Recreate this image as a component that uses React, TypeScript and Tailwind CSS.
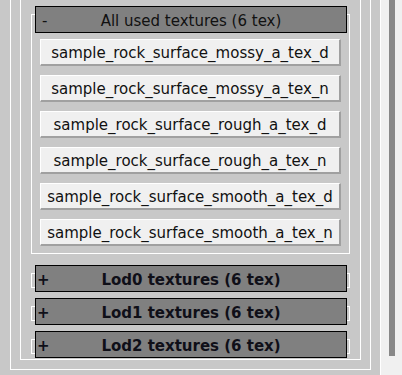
import React from "react";

const textures = [
  "sample_rock_surface_mossy_a_tex_d",
  "sample_rock_surface_mossy_a_tex_n",
  "sample_rock_surface_rough_a_tex_d",
  "sample_rock_surface_rough_a_tex_n",
  "sample_rock_surface_smooth_a_tex_d",
  "sample_rock_surface_smooth_a_tex_n",
];

function Header({ symbol, title, bold }: { symbol: string; title: string; bold?: boolean }) {
  return (
    <div className="relative z-10 ml-[4px] w-[312px] h-[27px] bg-[#808080] border border-black flex items-center justify-center pt-[3px]">
      <span
        className={
          bold
            ? "absolute left-[1px] top-[3px] text-[15px] leading-[23px] font-bold text-[#0f0f18]"
            : "absolute left-[6px] top-[3px] text-[15px] leading-[23px] text-[#111]"
        }
      >
        {symbol}
      </span>
      <span className={bold ? "text-[15px] leading-[23px] font-bold text-[#0f0f18]" : "text-[15px] leading-[23px] text-[#111]"}>
        {title}
      </span>
    </div>
  );
}

function TexButton({ name }: { name: string }) {
  return (
    <div className="w-[301px] h-[27px] bg-[#f0f0f0] border-t border-l border-white border-r-2 border-b-2 border-r-[#a0a0a0] border-b-[#a0a0a0] flex items-center justify-center pt-[3px] text-[15px] leading-none text-[#111]">
      {name}
    </div>
  );
}

export default function App() {
  return (
    <div
      className="w-[402px] h-[375px] bg-[#c8c8c8] flex overflow-hidden"
      style={{ fontFamily: '"DejaVu Sans", Verdana, sans-serif' }}
    >
      <div className="w-[381px] h-full flex-none border-r border-white">
        <div className="ml-[10px] w-[361px] h-[370px] border-l border-r border-b border-white">
          <div className="ml-[9px] w-[341px] h-[360px] border-l border-r border-b border-white">
            <div className="ml-[10px] pt-[6px] w-[319px] flex flex-col">
              <Header symbol="-" title="All used textures (6 tex)" />
              <div className="-mt-[19px] w-[319px] h-[240px] border border-white pt-[24px] pl-[8px] flex flex-col gap-[9px]">
                {textures.map((t) => (
                  <TexButton key={t} name={t} />
                ))}
              </div>
              <div className="mt-[11px]">
                <Header symbol="+" title="Lod0 textures (6 tex)" bold />
                <div className="-mt-[19px] w-[319px] h-[15px] border border-white" />
              </div>
              <div className="mt-[10px]">
                <Header symbol="+" title="Lod1 textures (6 tex)" bold />
                <div className="-mt-[19px] w-[319px] h-[15px] border border-white" />
              </div>
              <div className="mt-[10px]">
                <Header symbol="+" title="Lod2 textures (6 tex)" bold />
                <div className="-mt-[19px] w-[319px] h-[15px] border border-white" />
              </div>
            </div>
          </div>
        </div>
      </div>
      <div className="flex-1 h-full bg-[#f0f0f0] pl-[8px]">
        <div className="w-[6px] h-[356px] bg-[#888888]" />
      </div>
    </div>
  );
}
